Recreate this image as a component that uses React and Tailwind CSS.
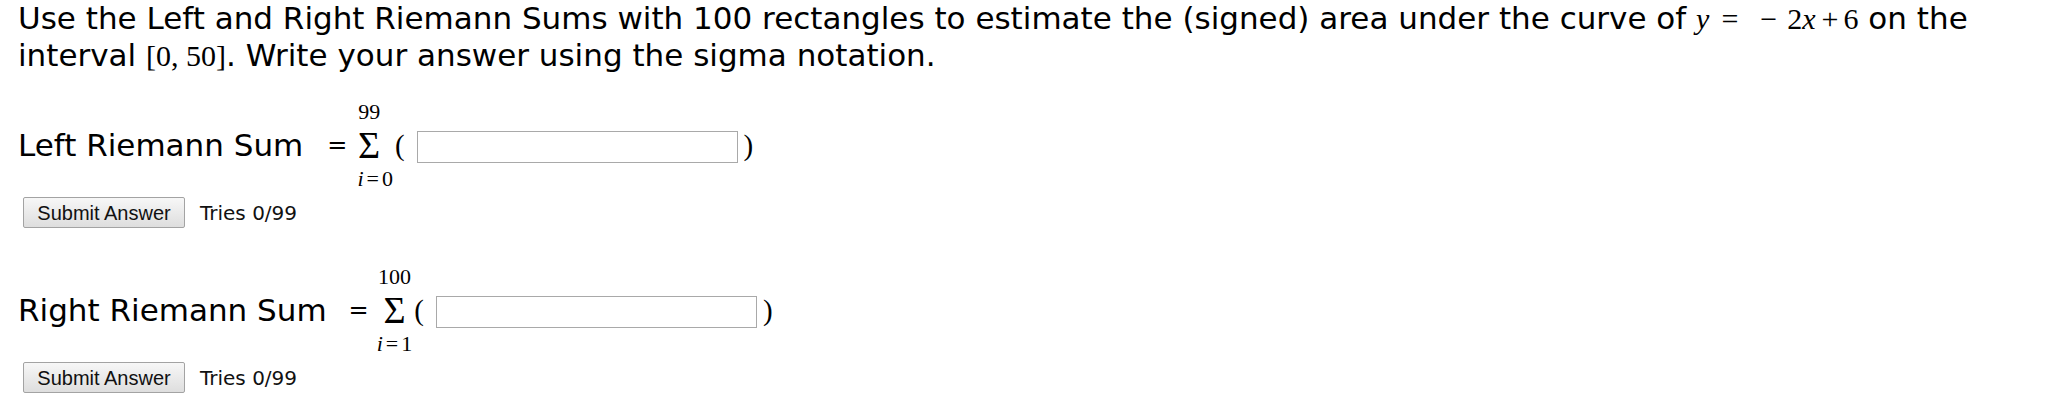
import React from "react";

const SANS = { fontFamily: '"DejaVu Sans", Verdana, sans-serif' };
const SERIF = { fontFamily: '"Liberation Serif", "Times New Roman", serif' };
const ARIAL = { fontFamily: '"Liberation Sans", Arial, sans-serif' };

function Sigma({ top, bottom, shiftLeft }) {
  return (
    <div className="flex flex-col items-center text-black" style={SERIF}>
      <div className={`text-[22px] leading-[25px] ${shiftLeft ? "mr-[12px]" : ""}`}>{top}</div>
      <div className={`text-[38px] leading-[42px] ${shiftLeft ? "mr-[12px]" : ""}`}>Σ</div>
      <div className="text-[22px] leading-[25px] flex">
        <i>i</i>
        <span className="mx-[3px]">=</span>
        <span>{bottom}</span>
      </div>
    </div>
  );
}

function SumRow({ label, top, bottom, shiftLeft, eqGap, stackGap }) {
  return (
    <div className="flex items-center">
      <span className="text-[31px] leading-[36px] whitespace-nowrap" style={SANS}>
        {label}
      </span>
      <span className={`text-[24px] leading-[36px] ${eqGap}`} style={SANS}>
        =
      </span>
      <div className={stackGap}>
        <Sigma top={top} bottom={bottom} shiftLeft={shiftLeft} />
      </div>
      <span className="text-[29px] leading-[36px] ml-[2px]" style={SERIF}>
        (
      </span>
      <input
        type="text"
        className="ml-[12px] mt-[4px] w-[321px] h-[32px] border border-[#a9a9a9] bg-white outline-none"
      />
      <span className="text-[29px] leading-[36px] ml-[6px]" style={SERIF}>
        )
      </span>
    </div>
  );
}

function SubmitRow() {
  return (
    <div className="flex items-center mt-[6px] pl-[5px]">
      <button
        className="w-[162px] h-[31px] rounded-[2px] border border-[#a3a3a3] bg-gradient-to-b from-[#f7f7f7] to-[#dedede] text-[20px] leading-[20px] text-[#111]"
        style={ARIAL}
      >
        Submit Answer
      </button>
      <span className="ml-[15px] text-[20px] leading-[24px] text-[#111]" style={SANS}>
        Tries 0/99
      </span>
    </div>
  );
}

export default function App() {
  return (
    <div className="w-[2046px] h-[416px] overflow-hidden bg-white text-black pl-[18px]">
      <p className="text-[31px] leading-[37px] whitespace-nowrap" style={SANS}>
        Use the Left and Right Riemann Sums with 100 rectangles to estimate the (signed) area under the curve of{" "}
        <span className="text-[30px]" style={SERIF}>
          <i>y</i>
          <span className="ml-[12px]">=</span>
          <span className="ml-[22px]">−</span>
          <span className="ml-[10px]">2</span>
          <i>x</i>
          <span className="ml-[6px]">+</span>
          <span className="ml-[5px]">6</span>
        </span>{" "}
        on the
        <br />
        interval{" "}
        <span className="text-[30px]" style={SERIF}>
          [0, 50]
        </span>
        . Write your answer using the sigma notation.
      </p>

      <div className="mt-[25px]">
        <SumRow
          label="Left Riemann Sum"
          top="99"
          bottom="0"
          shiftLeft
          eqGap="ml-[24px]"
          stackGap="ml-[10px]"
        />
        <SubmitRow />
      </div>

      <div className="mt-[36px]">
        <SumRow
          label="Right Riemann Sum"
          top="100"
          bottom="1"
          eqGap="ml-[22px]"
          stackGap="ml-[8px]"
        />
        <SubmitRow />
      </div>
    </div>
  );
}
